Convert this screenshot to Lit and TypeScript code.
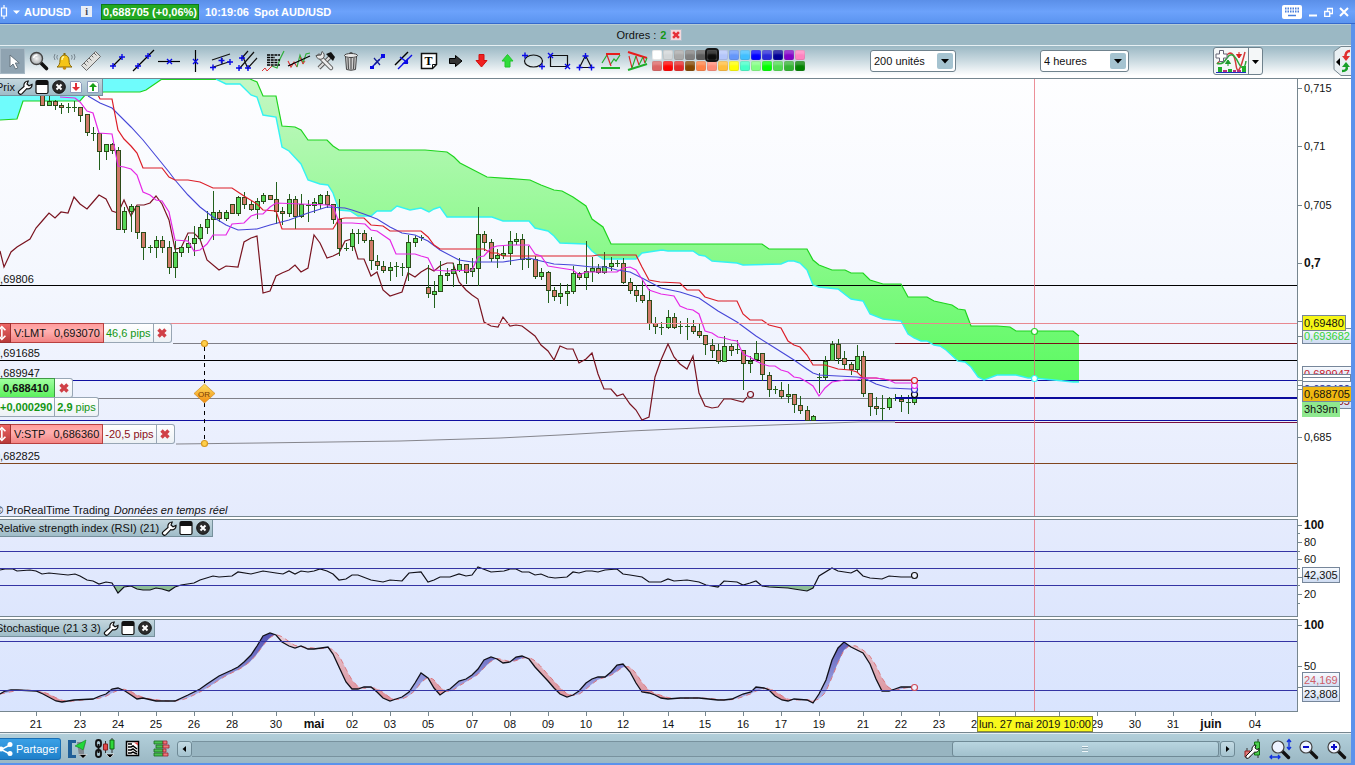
import { LitElement, html, svg, css } from "lit";
import { customElement } from "lit/decorators.js";
import { classMap } from "lit/directives/class-map.js";

type Pt = [number, number];
/* x, body top, body bottom, high, low, direction (1 up, 0 down) */
type Candle = [number, number, number, number, number, number];

const CANDLES: Candle[] = [
  [42, 93, 105, 92, 105, 0], [49, 101, 105, 96, 105, 1], [55, 101, 105, 100, 109, 0], [61, 105, 107, 103, 113, 0],
  [68, 107, 107, 103, 112, 1], [74, 107, 107, 101, 111, 1], [80, 107, 115, 107, 121, 0], [87, 114, 132, 114, 135, 0],
  [93, 133, 133, 127, 140, 1], [99, 133, 151, 133, 169, 0], [106, 144, 151, 144, 159, 1], [112, 144, 150, 143, 153, 0],
  [118, 150, 229, 147, 229, 0], [124, 211, 229, 207, 232, 1], [131, 206, 211, 204, 231, 1], [137, 206, 232, 206, 238, 0],
  [143, 232, 247, 232, 259, 0], [150, 247, 247, 245, 252, 1], [156, 240, 247, 236, 257, 1], [162, 240, 247, 236, 252, 0],
  [169, 247, 267, 241, 273, 0], [175, 252, 267, 241, 277, 1], [181, 247, 252, 246, 256, 1], [188, 243, 247, 236, 252, 1],
  [194, 238, 243, 226, 255, 1], [200, 227, 238, 224, 240, 1], [207, 219, 227, 211, 233, 1], [213, 212, 219, 191, 239, 1],
  [219, 212, 218, 210, 221, 0], [226, 212, 218, 210, 220, 1], [232, 204, 213, 204, 213, 0], [238, 197, 213, 196, 215, 1],
  [244, 197, 204, 192, 208, 0], [251, 204, 209, 201, 210, 0], [257, 201, 209, 198, 218, 1], [263, 195, 201, 193, 203, 1],
  [270, 195, 199, 195, 199, 0], [276, 199, 211, 182, 223, 0], [282, 211, 213, 207, 224, 0], [289, 199, 213, 194, 216, 1],
  [295, 199, 216, 196, 228, 0], [301, 204, 216, 194, 217, 1], [308, 205, 205, 200, 221, 1], [314, 202, 205, 198, 212, 1],
  [320, 195, 203, 194, 208, 1], [327, 195, 204, 191, 207, 0], [333, 204, 219, 204, 223, 0], [339, 219, 248, 199, 255, 0],
  [346, 248, 248, 243, 250, 1], [352, 233, 246, 229, 250, 1], [358, 233, 233, 229, 243, 1], [364, 233, 240, 230, 242, 0],
  [371, 240, 260, 237, 269, 0], [377, 261, 265, 255, 269, 0], [383, 266, 270, 261, 272, 0], [390, 267, 270, 262, 280, 1],
  [396, 266, 266, 262, 276, 1], [402, 267, 267, 263, 275, 1], [408, 242, 267, 235, 280, 1], [415, 238, 242, 236, 246, 1],
  [421, 237, 237, 235, 240, 1], [428, 287, 293, 265, 297, 0], [434, 291, 294, 281, 307, 1], [440, 275, 291, 261, 291, 1],
  [447, 273, 275, 268, 280, 1], [453, 269, 273, 263, 286, 1], [459, 264, 270, 258, 271, 1], [466, 264, 272, 264, 283, 0],
  [472, 268, 271, 258, 276, 1], [478, 234, 268, 207, 285, 1], [484, 234, 242, 231, 250, 0], [491, 242, 258, 239, 261, 0],
  [497, 255, 258, 249, 267, 1], [503, 253, 255, 246, 258, 1], [510, 241, 253, 231, 264, 1], [516, 239, 241, 233, 244, 1],
  [522, 239, 259, 234, 269, 0], [528, 259, 259, 246, 267, 1], [535, 259, 276, 256, 278, 0], [541, 272, 276, 268, 279, 1],
  [548, 272, 290, 271, 302, 0], [554, 290, 296, 287, 300, 0], [560, 293, 296, 283, 303, 1], [567, 291, 293, 284, 305, 1],
  [573, 273, 291, 266, 293, 1], [579, 273, 277, 272, 279, 0], [586, 271, 277, 241, 289, 1], [592, 268, 271, 257, 281, 1],
  [598, 268, 272, 264, 273, 0], [604, 266, 272, 252, 273, 1], [611, 263, 266, 257, 270, 1], [617, 263, 263, 260, 266, 1],
  [623, 263, 282, 258, 283, 0], [630, 282, 290, 278, 293, 0], [636, 290, 295, 285, 301, 0], [642, 295, 300, 280, 302, 0],
  [649, 300, 323, 289, 329, 0], [655, 323, 326, 317, 333, 0], [661, 327, 327, 322, 334, 1], [668, 317, 327, 310, 328, 1],
  [674, 317, 327, 313, 328, 0], [680, 326, 326, 321, 333, 1], [687, 326, 326, 318, 339, 1], [693, 326, 331, 320, 333, 0],
  [699, 331, 335, 323, 337, 0], [705, 335, 344, 335, 354, 0], [712, 345, 350, 339, 357, 0], [718, 350, 361, 344, 363, 0],
  [724, 346, 361, 336, 361, 1], [731, 346, 350, 344, 355, 0], [737, 349, 349, 340, 353, 1], [743, 350, 363, 350, 389, 0],
  [750, 361, 363, 356, 372, 1], [756, 353, 359, 341, 361, 1], [762, 353, 374, 353, 380, 0], [769, 375, 389, 372, 396, 0],
  [775, 389, 389, 386, 393, 1], [781, 390, 396, 382, 398, 0], [788, 394, 396, 384, 402, 1], [794, 394, 404, 394, 412, 0],
  [800, 405, 410, 396, 413, 0], [807, 410, 420, 406, 420, 0], [813, 416, 420, 415, 420, 1], [819, 377, 377, 373, 392, 1],
  [825, 361, 377, 356, 380, 1], [832, 344, 360, 341, 360, 1], [838, 344, 358, 339, 363, 0], [844, 358, 364, 351, 369, 0],
  [851, 364, 369, 362, 374, 0], [857, 356, 369, 345, 372, 1], [863, 356, 393, 351, 396, 0], [870, 393, 406, 393, 415, 0],
  [876, 406, 408, 397, 414, 0], [882, 408, 408, 395, 419, 1], [889, 398, 407, 397, 409, 1], [895, 398, 398, 394, 400, 1],
  [901, 399, 401, 395, 411, 0], [908, 402, 402, 395, 413, 1], [914, 398, 402, 396, 404, 1],
];

const CHIKOU = "0,251 4,267 11,252 17,247 30,239 36,228 43,220 49,213 55,218 61,212 68,213 74,197 80,204 87,209 93,202 99,195 106,199 112,211 118,213 124,200 131,216 137,205 144,205 150,203 156,196 162,204 169,220 175,249 181,248 188,233 194,233 200,239 207,260 219,270 226,266 238,267 244,242 251,238 257,236 263,293 270,291 276,276 282,273 289,270 295,265 301,272 308,268 314,235 320,243 327,258 333,256 339,253 345,241 352,239 358,259 364,259 371,276 377,272 383,290 390,296 402,292 408,273 415,277 421,272 428,268 434,271 440,266 447,263 453,263 459,282 466,290 472,295 478,299 484,322 491,326 498,327 503,317 510,326 516,325 522,326 535,336 541,345 548,351 554,360 560,346 567,349 573,349 579,363 586,359 592,353 598,374 604,389 611,389 617,396 623,394 630,404 636,410 642,420 649,417 655,377 661,360 668,344 674,357 680,364 687,369 693,356 699,393 705,406 712,408 718,407 724,399 731,399 743,402 747,397";
const TENKAN = "60,97 75,98 80,102 87,111 93,113 99,133 112,134 118,166 124,167 131,169 137,175 143,192 150,195 156,200 162,201 169,212 175,240 188,241 194,251 200,250 207,244 213,235 226,235 232,224 244,223 251,216 257,214 263,214 270,207 276,203 301,204 327,205 333,206 339,223 352,223 365,224 371,230 377,231 390,240 396,254 415,254 421,256 428,258 434,270 447,271 472,270 478,257 484,256 491,248 497,246 510,245 529,245 535,254 541,256 548,266 560,268 573,270 579,275 586,272 617,272 623,268 630,267 636,270 642,279 649,290 661,294 674,296 680,306 687,309 693,310 699,314 705,331 712,333 718,337 724,338 731,340 737,341 743,354 750,357 756,361 762,364 769,366 775,366 781,370 788,372 794,377 800,378 807,382 813,386 819,396 825,388 832,382 845,380 857,380 863,378 876,378 889,380 895,383 911,383";
const KIJUN = "98,95 100,99 112,99 118,130 124,139 131,146 137,153 143,168 162,168 169,177 175,180 188,180 200,182 213,188 232,188 244,196 257,204 263,210 276,211 282,229 333,229 339,219 345,218 364,218 371,225 383,226 390,231 421,231 428,237 434,245 440,249 484,249 491,253 497,253 503,256 592,256 598,255 636,255 642,267 649,280 660,282 680,283 687,290 699,290 705,297 718,301 737,301 743,314 750,320 762,320 769,325 781,328 788,341 794,345 800,347 807,355 813,365 825,365 838,369 850,370 857,372 863,378 876,378 889,380 911,380";
const AVERAGE = "88,96 100,103 112,108 131,127 143,140 156,156 169,172 175,180 188,195 200,207 213,217 226,225 238,230 257,229 270,225 289,220 308,213 327,207 345,208 352,210 364,214 377,219 390,227 402,233 415,235 428,241 440,250 459,260 472,262 503,262 529,258 541,261 554,264 573,265 592,267 605,267 617,270 630,272 642,278 661,288 680,292 699,298 718,311 737,322 756,336 775,348 794,360 807,369 813,373 819,375 838,376 857,377 864,378 876,384 889,388 911,389";
const LONG_AVERAGE = "176,444 260,443 330,442 400,441 500,438 560,435 630,431 720,427 800,424 860,422 895,422";
const SPAN_A = "216,79 250,79 257,82 263,96 276,96 282,126 295,127 301,130 308,140 327,140 333,146 339,150 425,150 447,152 454,157 460,163 487,177 530,180 541,185 554,190 562,191 573,197 586,206 592,219 603,227 611,244 762,244 769,249 807,249 813,260 819,265 832,270 845,270 851,273 863,273 870,280 883,284 901,284 908,297 927,297 934,301 952,305 958,309 965,310 971,326 997,326 1010,327 1016,331 1073,331 1079,336";
const SPAN_B = "216,79 226,84 240,84 251,95 257,97 263,115 276,117 282,147 289,151 301,164 308,180 320,184 328,185 333,193 339,210 350,211 358,216 371,216 377,211 391,211 397,206 410,210 421,208 429,212 434,209 440,207 447,217 492,217 503,221 529,221 535,228 548,231 554,236 560,243 586,244 592,251 597,255 603,259 636,259 642,253 662,250 668,251 693,251 699,255 705,256 712,261 737,263 743,265 781,264 788,261 794,261 800,263 807,270 813,285 819,287 838,289 851,299 863,301 870,314 883,319 901,321 908,334 914,338 921,341 927,341 934,345 940,346 946,350 958,361 965,362 971,367 978,377 984,380 997,375 1016,375 1028,378 1034,378 1054,380 1073,382 1079,382";
const EARLY_SPAN = "0,120 17,119 23,101 80,101 86,94 104,92 140,92 146,90 162,79";
const RSI = "0,570 5,569 13,569 17,571 30,570 36,571 42,574 49,573 68,575 75,574 80,576 87,580 93,581 99,584 106,582 112,583 118,593 124,587 131,586 137,589 143,590 150,590 156,588 162,589 169,591 175,587 181,585 194,583 200,580 213,576 219,577 232,576 238,572 251,574 263,571 276,573 283,574 289,571 295,574 301,571 308,572 314,571 320,569 327,571 333,574 339,580 346,579 352,575 358,575 371,580 383,582 390,580 402,581 409,573 421,572 428,582 434,580 440,577 450,577 459,574 466,576 472,575 478,567 491,572 504,571 510,569 516,569 522,572 529,572 535,575 541,574 548,577 555,578 567,577 573,572 579,573 586,571 592,571 598,572 605,570 617,569 623,574 630,575 642,577 649,582 661,582 668,579 674,581 687,580 699,582 706,585 718,587 724,581 737,582 743,585 750,583 756,581 762,586 769,587 788,588 794,589 807,591 813,588 819,576 832,568 838,571 851,573 857,570 863,576 870,578 882,579 889,576 901,577 911,577";
const STOCHASTIC = "0,694 5,691 11,690 17,690 36,691 43,694 56,701 62,702 74,700 93,699 100,696 106,694 112,689 118,688 125,691 131,695 137,699 143,698 156,701 168,701 175,701 188,695 200,689 207,684 213,680 219,676 232,670 238,667 244,662 251,655 257,646 263,636 270,633 276,635 282,642 289,646 295,648 301,646 308,649 314,649 328,647 333,654 339,667 346,682 352,689 358,689 364,687 371,687 377,692 383,698 390,701 396,699 402,697 409,692 415,683 421,673 428,678 434,688 440,695 447,690 450,689 459,681 466,679 472,675 478,669 484,660 491,657 497,659 503,663 510,662 516,657 522,656 529,659 535,667 548,681 554,688 560,694 567,697 573,695 579,691 586,683 592,679 598,677 605,677 611,672 617,665 623,664 630,672 636,683 642,692 649,693 655,695 661,698 668,699 680,698 699,698 718,700 724,700 732,699 743,694 751,692 756,687 764,688 769,690 775,696 782,700 788,701 794,699 807,700 813,703 819,694 826,680 832,660 838,648 844,642 851,647 857,650 863,653 870,664 876,679 882,691 889,691 895,689 901,687 911,687";

const parse = (s: string): Pt[] => s.split(" ").map((p) => p.split(",").map(Number) as Pt);
const join = (pts: Pt[]): string => pts.map((p) => p.join(",")).join(" ");
const reverse = (s: string): string => s.split(" ").reverse().join(" ");

/* Linear interpolation of a polyline at x */
function valueAt(pts: Pt[], x: number): number {
  if (x <= pts[0][0]) return pts[0][1];
  for (let i = 1; i < pts.length; i++) {
    const [x1, y1] = pts[i];
    if (x <= x1) {
      const [x0, y0] = pts[i - 1];
      return y0 + ((y1 - y0) * (x - x0)) / (x1 - x0);
    }
  }
  return pts[pts.length - 1][1];
}

/* %D is the three-period mean of %K */
const K_LINE = parse(STOCHASTIC);
const PERIOD = 6;
const SAMPLES = Array.from({ length: 457 }, (_, i) => i * 2);
const fastLine: Pt[] = SAMPLES.map((x) => [x, valueAt(K_LINE, x)]);
const slowLine: Pt[] = SAMPLES.map((x) => [
  x,
  (valueAt(K_LINE, x) + valueAt(K_LINE, x - PERIOD) + valueAt(K_LINE, x - 2 * PERIOD)) / 3,
]);
const bullArea = join([...fastLine.map(([x, y], i): Pt => [x, Math.min(y, slowLine[i][1])]), ...[...slowLine].reverse()]);
const bearArea = join([...fastLine.map(([x, y], i): Pt => [x, Math.max(y, slowLine[i][1])]), ...[...slowLine].reverse()]);

const PRICE = { top: 79, height: 438 };
const OSC1 = { top: 519, height: 98 };
const OSC2 = { top: 619, height: 93 };
type Panel = typeof PRICE;
const pct = (y: number, p: Panel): string => `top:${(((y - p.top) / p.height) * 100).toFixed(3)}%`;
const left = (x: number): string => `left:${((x / 1298) * 100).toFixed(3)}%`;

const DATES: [number, string, boolean?][] = [
  [36, "21"], [80, "23"], [118, "24"], [156, "25"], [194, "26"], [232, "28"], [276, "30"], [314, "mai", true],
  [352, "02"], [390, "03"], [428, "05"], [472, "07"], [510, "08"], [548, "09"], [586, "10"], [623, "12"],
  [668, "14"], [705, "15"], [743, "16"], [781, "17"], [819, "19"], [863, "21"], [901, "22"], [939, "23"],
  [977, "24"], [1015, ""], [1059, ""], [1097, "29"], [1135, "30"], [1173, "31"], [1211, "juin", true], [1255, "04"],
];

const plus = (x: number, y: number) => svg`<path d="M${x - 3} ${y}h6M${x} ${y - 3}v6" stroke="#0a0ae6" stroke-width="1.4" fill="none"/>`;
const cross = (x: number, y: number) => svg`<path d="M${x - 2.5} ${y - 2.5}l5 5M${x + 2.5} ${y - 2.5}l-5 5" stroke="#0a0ae6" stroke-width="1.4" fill="none"/>`;

const TOOLS: [string, unknown][] = [
  ["Sélection", svg`<path d="M10 7v12l3-3 2.500 5 2.300-1.200-2.500-4.800h4z" fill="#fff" stroke="#66757f" stroke-width="1"/>`],
  ["Loupe", svg`<path d="M15.500 15.500l5 5" stroke="#111" stroke-width="3.600" stroke-linecap="round"/><circle cx="10.500" cy="10.500" r="6" fill="url(#lens)" stroke="#444" stroke-width="1.400"/><path d="M7.500 10a4 4 0 0 1 4-3" stroke="#fff" stroke-width="1.500" fill="none"/>`],
  ["Alertes", svg`<path d="M5 19c2-1.500 3-3 3-7a4.500 5 0 0 1 9 0c0 4 1 5.500 3 7z" fill="#f5c518" stroke="#8a6a08"/><path d="M10 12c0-2 .8-3 2-3.300" stroke="#fff3a0" stroke-width="1.500" fill="none"/><circle cx="12.500" cy="20" r="1.800" fill="#c78a0c"/><path d="M12.500 5v2" stroke="#8a6a08" stroke-width="2"/><path d="M5.500 7q-1.500 2 0 4.500M3 6q-2 3 0 6M19.500 7q1.500 2 0 4.500M22 6q2 3 0 6" stroke="#6f7d86" stroke-width=".9" fill="none"/>`],
  ["Règle", svg`<path d="M3.500 17.500L17.500 3.500l5 5-14 14z" fill="#e0e0dd" stroke="#6a6a6a"/><path d="M6 15l2.500 2.500M8.500 12.500l1.800 1.800M11 10l2.500 2.500M13.500 7.500l1.800 1.800M16 5l2.500 2.500" stroke="#555" stroke-width=".9"/>`],
  ["Segment", svg`<path d="M9 18l9-9" stroke="#000" stroke-width="1.200"/>${plus(9, 18)}${plus(18, 9)}`],
  ["Droite", svg`<path d="M3 23L24 2" stroke="#000" stroke-width="1.200"/>${plus(8, 18)}${plus(18, 8)}`],
  ["Ligne horizontale", svg`<path d="M2 13.500h22" stroke="#000" stroke-width="1.200"/>${cross(13.5, 13.5)}`],
  ["Ligne verticale", svg`<path d="M13.500 2v22" stroke="#000" stroke-width="1.200"/>${cross(13.5, 13.5)}`],
  ["Canal", svg`<path d="M4 12l18-6M4 19.500l18-6M14 10v6" stroke="#111" stroke-width="1.200"/>${plus(5, 19.5)}${plus(13.5, 12.5)}${plus(22, 14)}`],
  ["Fourchette", svg`<path d="M7 11l7-8M5 21L20 4M13 21l10-11M9 9l5 12" stroke="#111" stroke-width="1.200"/>${plus(8, 10)}${plus(5, 20)}${plus(14, 20)}`],
  ["Texte sur courbe", svg`<path d="M2 23l3-3 2 3 5-5" stroke="#d33" fill="none"/><path d="M12 18l5 2 3-9 4-8" stroke="#2fae3a" stroke-width="1.200" fill="none"/><path d="M7 7h13M7 9.500h8M7 12h13M7 14.500h11M7 17h13" stroke="#000" stroke-width="1.300" stroke-dasharray="3 .7"/>`],
  ["Régression", svg`<path d="M2 13l3 6 3-5 3 5" stroke="#d33" stroke-width="1.100" fill="none"/><path d="M11 19l3-12 3 8 3-9 4-1" stroke="#2fae3a" stroke-width="1.100" fill="none"/><path d="M14 9l3 7 2-3" stroke="#d33" fill="none"/><path d="M2 18L24 8" stroke="#000" stroke-width="1.200"/>`],
  ["Outils", svg`<path d="M7 20L19 8" stroke="#555" stroke-width="4"/><path d="M7 20L19 8" stroke="#ddd" stroke-width="2.200"/><path d="M14 6l5-2 4 5-2 4-3-3z" fill="#111"/><path d="M7 8l12 12" stroke="#555" stroke-width="4.500" stroke-linecap="round"/><path d="M7 8l12 12" stroke="#ececec" stroke-width="2.700" stroke-linecap="round"/><path d="M4 7.500a4.500 4.500 0 0 0 7 3 4.500 4.500 0 0 0-1-7l-1 3.500z" fill="#e8e8e8" stroke="#555"/>`],
  ["Supprimer", svg`<path d="M7.500 8.500h11l-1 13q-4.500 1.500-9 0z" fill="#cfcfcf" stroke="#444"/><path d="M10 10l.5 11M13 10v11.500M16 10l-.5 11" stroke="#555" stroke-width="1.200"/><ellipse cx="13" cy="7.500" rx="6.500" ry="2" fill="#e9e9e9" stroke="#444"/><path d="M11 5.500q2-2 4 0" stroke="#444" fill="none"/>`],
  ["Prolonger", svg`<path d="M8 19L19 8" stroke="#0a0ae6" stroke-width="1.400" stroke-dasharray="3 1"/><path d="M6 18h4v3H6zM17 6h4v4h-4z" fill="#0a0ae6"/><path d="M10 10l6 7M16 11l-6 6" stroke="#111a90" stroke-width="1.200"/>`],
  ["Parallèle", svg`<path d="M5 17L18 4" stroke="#000" stroke-width="1.400"/><path d="M8 21L22 7M10 9l8 6" stroke="#0a0ae6" stroke-width="1.400"/><path d="M18 10v6h-6z" fill="#0a0ae6"/>`],
  ["Texte", svg`<path d="M5.500 5.500h15v11l-4 4h-11z" fill="#fff" stroke="#111" stroke-width="1.500"/><path d="M20.500 16.500h-4v4" fill="none" stroke="#111"/><text x="12.500" y="17" text-anchor="middle" font-family="Liberation Serif, serif" font-weight="bold" font-size="12" fill="#000">T</text>`],
  ["Flèche droite", svg`<path d="M7.500 10.500h6v-3l6.500 5.500-6.500 5.500v-3h-6z" fill="#333" stroke="#000"/>`],
  ["Flèche bas", svg`<path d="M11 6.500h5v6h3l-5.500 6.500-5.500-6.500h3z" fill="#f02020" stroke="#d01010"/>`],
  ["Flèche haut", svg`<path d="M11 19v-6h-3l5.500-6.500 5.500 6.500h-3v6z" fill="#2fdc3a" stroke="#22c42c"/>`],
  ["Ellipse", svg`<ellipse cx="13.500" cy="13" rx="9" ry="6" fill="none" stroke="#111" stroke-width="1.200"/>${plus(5, 7.5)}${plus(22, 18.5)}`],
  ["Rectangle", svg`<path d="M4.500 7.500h17v11h-17z" fill="none" stroke="#111" stroke-width="1.200"/>${cross(4.5, 7.5)}${cross(21.5, 18.5)}`],
  ["Triangle", svg`<path d="M13.500 7.500l6 12h-12z" fill="none" stroke="#111" stroke-width="1.200"/>${plus(13.5, 8)}${plus(7.5, 19.5)}${plus(19.5, 19.5)}`],
  ["Range", svg`<path d="M8 6h14" stroke="#e81c1c" stroke-width="2"/><path d="M3 20h19" stroke="#1fae2a" stroke-width="2"/><path d="M4 15l5-8M12 17l4-6 2 2 4-6" stroke="#1fae2a" fill="none" stroke-width="1.200"/><path d="M9 7l4 11" stroke="#d22" stroke-width="1.200"/>`],
  ["Triangle de range", svg`<path d="M4 4l19 6" stroke="#e81c1c" stroke-width="2"/><path d="M4 22l19-6" stroke="#1fae2a" stroke-width="2"/><path d="M5 8l3 12M12 8l3 9M19 9l2 6" stroke="#d22" stroke-width="1.100"/><path d="M8 20l4-12M15 17l4-8M21 15l2-5" stroke="#1fae2a" stroke-width="1.100"/>`],
];

const COLORS = [
  "#ffffff", "#d2d6d8", "#a9a9a9", "#808080", "#5c5c5c", "#0c0c0c", "#b4c6fa", "#6496fa", "#40bfff", "#0000ff", "#2828d8", "#000096", "#8200c8", "#ff82c0",
  "#dc6464", "#ff0000", "#e62828", "#824600", "#ff8246", "#ff8c78", "#ffbe3c", "#ffff00", "#46ffc8", "#82ff82", "#00ff00", "#50dc50", "#32b432", "#008200",
];

const wrench = html`<svg class="glyph" viewBox="0 0 16 16"><path d="M2 14.500c-1-1-.8-1.800 0-2.600l5-4.400c-.6-3 1.300-5.500 4.200-5.500l-1.200 3 2 1.800 3-1.300c.2 3-2.300 5-5.200 4.200l-4.700 5c-1 1-2 .9-3.100-.2z" fill="#fff" stroke="#111" stroke-width="1.200"/></svg>`;
const windowGlyph = html`<svg class="glyph" viewBox="0 0 16 16"><rect x="2" y="1.500" width="12" height="13" rx="1.500" fill="#fff" stroke="#111" stroke-width="1.200"/><path d="M2 2h12v4H2z" fill="#111"/></svg>`;
const closeGlyph = html`<svg class="glyph" viewBox="0 0 16 16"><circle cx="8" cy="8" r="6.300" fill="#2c2c2c" stroke="#111"/><path d="M5.500 5.500l5 5M10.500 5.500l-5 5" stroke="#fff" stroke-width="2"/></svg>`;
const downPage = html`<svg class="glyph" viewBox="0 0 16 16"><path d="M2.500 2.500h9l2 2v9h-11z" fill="#fff" stroke="#8b9aba"/><path d="M7 4h2v4h3l-4 4-4-4h3z" fill="#e0303a"/></svg>`;
const upPage = html`<svg class="glyph" viewBox="0 0 16 16"><path d="M2.500 2.500h9l2 2v9h-11z" fill="#fff" stroke="#8b9aba"/><path d="M7 12h2v-4h3l-4-4-4 4h3z" fill="#16a016"/></svg>`;
const redCross = html`<svg class="cross" viewBox="0 0 12 12"><path d="M2.500 2.500l7 7M9.500 2.500l-7 7" stroke="#d04046" stroke-width="3.400"/></svg>`;
const handle = html`<svg class="handle" viewBox="0 0 11 20"><path d="M2 5v10M-2 7l4-4 4 4M-2 13l4 4 4-4" stroke="#fff" stroke-width="1.800" fill="none"/></svg>`;

@customElement("app-root")
export class AppRoot extends LitElement {
  static styles = css`
    :host { display: flex; flex-direction: column; height: 100vh; min-height: 480px; box-sizing: border-box; overflow: hidden;
      font: 11px/14px "Liberation Sans", Arial, sans-serif; color: #111; background: #5b92ec; border-bottom: 2px solid #5b92ec; }
    * { box-sizing: border-box; }
    button { font: inherit; color: inherit; padding: 0; border: 0; background: none; display: block; }
    svg { display: block; }
    .title { flex: none; height: 24px; display: flex; align-items: center; color: #fff; font-weight: bold; white-space: nowrap;
      background: linear-gradient(#5b8fe8, #6ca2fb 50%, #5b94f0); border-bottom: 1px solid #3569cc; }
    .symbol { display: flex; align-items: center; gap: 3px; font-weight: bold; }
    .info { width: 11px; height: 11px; margin-left: 10px; background: #e8eef8; color: #445; font: bold 10px/11px "Liberation Serif", serif; }
    .quote { margin: 0 6px 0 9px; padding: 0 1px; background: #22a822; border: 1px solid #0c7a1c; line-height: 14px; }
    .clock { margin-right: 5px; }
    .controls { margin-left: auto; display: flex; align-items: center; gap: 6px; padding-right: 6px; }
    .frame { flex: 1; min-height: 0; display: flex; flex-direction: column; margin-right: 1px; border-right: 3px solid #5b92ec; background: #fff; }
    .orders { flex: none; height: 21px; display: flex; align-items: center; justify-content: center; gap: 4px; padding-right: 52px;
      background: #9bb8c4; border-top: 1px solid #b6ccd5; }
    .orders b { color: #139613; }
    .cancel { width: 12px; height: 12px; background: #f4d8dc; border: 1px solid #aebfcc; }
    .tools { flex: none; height: 34px; display: flex; align-items: center; padding-bottom: 2px; border-top: 1px solid #e6eff3; border-bottom: 1px solid #76868f;
      background: linear-gradient(#9bb8c4, #c9d9e0 45%, #ffffff 92%); }
    .tool { width: 26px; height: 26px; flex: none; }
    .tool.on { background: #8fa3b1; border: 1px solid #a6b8c4; width: 25px; margin-right: 1px; }
    .tool svg { width: 26px; height: 26px; }
    .tool.on svg { margin: -1px; }
    .palette { display: grid; grid-template-columns: repeat(14, 11px); grid-auto-rows: 11px; margin-left: 2px; }
    .swatch { width: 10px; height: 10px; border-radius: 2px; box-shadow: inset 0 4px 2px rgba(255, 255, 255, .22), inset 0 0 0 1px rgba(90, 90, 90, .15); }
    .swatch.on { outline: 2px solid #151515; position: relative; }
    .pick { position: relative; margin-left: 64px; height: 22px; display: block; }
    .pick.frameSize { margin-left: 84px; }
    .pick select { appearance: none; width: 86px; height: 22px; padding: 0 22px 0 3px; font: 11px "Liberation Sans", Arial, sans-serif; color: #111;
      background: #fff; border: 1px solid #6f828d; border-radius: 3px; }
    .pick.frameSize select { width: 89px; }
    .pick svg { position: absolute; right: 3px; top: 3px; width: 16px; height: 16px; pointer-events: none; }
    .right { margin-left: auto; display: flex; align-items: center; }
    .indicator { display: flex; height: 28px; border: 1px solid #6f828d; border-radius: 3px; background: #f4f7f8; overflow: hidden; }
    .indicator svg { width: 34px; height: 26px; }
    .indicator .drop { width: 14px; border-left: 1px solid #6f828d; }
    .indicator .drop svg { width: 13px; }
    .sync { margin-left: 70px; }
    .panels { flex: 1; min-height: 0; display: flex; flex-direction: column; gap: 2px; }
    .panel { min-height: 0; display: flex; }
    .panel.price { flex: 438 1 0; }
    .panel.rsi { flex: 98 1 0; }
    .panel.stoch { flex: 93 1 0; }
    .plot { position: relative; flex: 1; min-width: 0; overflow: hidden; border-right: 1px solid #76868f; border-bottom: 1px solid #76868f; }
    .price .plot { background: linear-gradient(#fefeff, #f4f7fe 45%, #e5ebfd); }
    .rsi .plot { border-top: 1px solid #76868f; background: linear-gradient(#e5ebfd, #dde6fd); }
    .stoch .plot { border-top: 1px solid #76868f; background: linear-gradient(#e0e8fd, #d9e4fe); }
    .canvas { position: absolute; inset: 0; width: 100%; height: 100%; }
    .head { position: absolute; left: 0; top: 0; height: 17px; display: flex; align-items: center; gap: 1px; padding-right: 1px; white-space: nowrap;
      background: linear-gradient(#c3d6de, #9fbcc8); border-right: 1px solid #76909c; border-bottom: 1px solid #76909c; }
    .head span { margin-left: -4px; margin-right: 1px; }
    .glyph { width: 16px; height: 16px; }
    .level { position: absolute; left: -6px; line-height: 12px; margin-top: -12px; white-space: nowrap; }
    .credit { position: absolute; left: -5px; bottom: -1px; white-space: nowrap; }
    .credit i { margin-left: 1px; }
    .order { position: absolute; left: 0; display: flex; height: 20px; white-space: nowrap; }
    .cell { display: flex; align-items: center; justify-content: center; border: 1px solid #98a6b4; border-left: 0; background: linear-gradient(#ffffff, #ecf1f5); padding: 0 2px; }
    .order .cell:last-child { border-radius: 0 3px 3px 0; }
    .cell.sell { background: linear-gradient(#ff9c9c, #ffb0b0 40%, #f28484); border-color: #b84040; padding: 0 3px; gap: 8px; }
    .cell.grip { background: linear-gradient(#e66, #b83a3a); border-color: #a03030; width: 11px; padding: 0; }
    .cell.gain { color: #139613; }
    .cell.loss { color: #8b1020; }
    .cell.hold { background: linear-gradient(#a0ffa0, #5cf05c); border-color: #3f9a45; font-weight: bold; width: 55px; justify-content: flex-end; padding: 0 5px 0 0; }
    .cell.strong { font-weight: bold; width: 55px; justify-content: flex-start; padding: 0; }
    .cell.wide { width: 44px; }
    .cell.strong + .cell b { margin-right: 3px; }
    .cell.x { width: 18px; padding: 0; }
    .cross { width: 12px; height: 12px; }
    .handle { width: 11px; height: 18px; }
    .axis { position: relative; flex: none; width: 53px; overflow: hidden; background: #fff; }
    .mark { position: absolute; left: 0; height: 15px; margin-top: -7px; display: flex; align-items: center; gap: 2px; line-height: 15px; white-space: nowrap; }
    .mark::before { content: ""; width: 4px; height: 1px; background: #76868f; }
    .mark.minor::before { width: 2px; }
    .mark.big { font-weight: bold; font-size: 12px; }
    .tag { position: absolute; left: 4px; height: 16px; margin-top: -8px; padding: 0 1px; line-height: 14px; border: 1px solid #76869a;
      background: linear-gradient(#f7fafe, #cfdcf2); white-space: nowrap; }
    .tag.cursor { background: #f6f616; }
    .tag.last { background: #f0b810; }
    .tag.timer { background: #8fe88f; border-color: #8fe88f; }
    .tag.green { color: #35d435; }
    .tag.red { color: #c8202c; }
    .tag.navy { color: #1c1c90; }
    .tag.maroon { color: #8b1020; }
    .tag.rose { color: #cf5c66; }
    .tag.blank { width: 49px; height: 5px; background: #fff; margin-top: 0; }
    .dates { position: relative; flex: none; height: 21px; border-bottom: 1px solid #76868f; overflow: hidden; }
    .scale { position: absolute; left: 0; right: 53px; top: 0; bottom: 0; }
    .date { position: absolute; top: 0; width: 40px; margin-left: -20px; display: flex; flex-direction: column; align-items: center; line-height: 16px; }
    .date::before { content: ""; width: 1px; height: 4px; background: #76868f; margin-left: 1px; }
    .date.big { font-weight: bold; font-size: 12px; }
    .when { position: absolute; top: 4px; width: 116px; margin-left: -58px; text-align: center; line-height: 14px; background: #f8f81c; border: 1px solid #8a8a30; white-space: nowrap; }
    .bottom { flex: none; height: 30px; display: flex; align-items: center; gap: 4px; padding-right: 3px; border-top: 1px solid #e6eff3; background: linear-gradient(#b2cfda, #9bb8c4); }
    .share { display: flex; align-items: center; gap: 3px; width: 61px; height: 22px; color: #fff; border: 1px solid #1a6fb4; border-left: 0; border-radius: 0 3px 3px 0; background: linear-gradient(#3aa0e6, #1f80ca); }
    .share svg { width: 13px; height: 16px; }
    .left { display: flex; align-items: center; gap: 4px; }
    .left button svg { width: 24px; height: 22px; }
    .scroll { flex: 1; display: flex; height: 16px; margin-right: 1px; }
    .track { flex: 1; display: flex; justify-content: flex-end; border: 1px solid #78929e; border-width: 1px 0; background: #98b5c1; }
    .thumb { width: 26%; margin: -1px 1px -1px 0; border: 1px solid #6f8a96; border-radius: 3px; background: linear-gradient(#b9d5e0, #a2c1cd); display: flex; align-items: center; justify-content: center; }
    .step { width: 15px; height: 16px; border: 1px solid #6f8a96; border-radius: 3px; background: linear-gradient(#c4dbe4, #a5c3cf); }
    .step svg { width: 13px; height: 14px; }
    .zoom svg { width: 24px; height: 24px; }
  `;

  private get crosshair() {
    return svg`<path d="M1034.500 0v765" stroke="#e66a76" stroke-opacity=".75" fill="none"/>`;
  }

  private renderPrice() {
    const hline = (y: number, color: string, from = 0, to = 1297) =>
      svg`<path d="M${from} ${y + 0.5}H${to}" stroke=${color} fill="none"/>`;
    const ring = (x: number, y: number, color: string, fill = "#eef2ff") =>
      svg`<circle cx=${x + 0.5} cy=${y + 0.5} r="3" fill=${fill} stroke=${color} stroke-width="1.200"/>`;
    return html`<svg class="canvas" viewBox="0 79 1297 437" preserveAspectRatio="none" aria-label="Graphique AUD/USD">
      <defs>
        <linearGradient id="cloud" gradientUnits="userSpaceOnUse" x1="0" y1="79" x2="0" y2="385">
          <stop offset="0" stop-color="#c4f7c4"/><stop offset=".45" stop-color="#97f997"/><stop offset="1" stop-color="#5afa60"/>
        </linearGradient>
        <linearGradient id="or" x1="0" y1="0" x2="0" y2="1"><stop offset="0" stop-color="#ffe060"/><stop offset="1" stop-color="#f08c10"/></linearGradient>
      </defs>
      <polygon points=${`0,79 ${EARLY_SPAN}`} fill="#6ffcfc"/>
      <polyline points=${EARLY_SPAN} fill="none" stroke="#1ed41e" stroke-width="1.200"/>
      <path d="M162 79.500H252" stroke="#1ed41e"/>
      <polygon points=${`${SPAN_A} ${reverse(SPAN_B)}`} fill="url(#cloud)"/>
      ${hline(285, "#000")}${hline(343, "#808088", 173, 895)}${hline(343, "#7a1018", 895)}${hline(360, "#000")}
      ${hline(380, "#1010a0")}${hline(398, "#808088", 0, 895)}${hline(420, "#1010a0")}${hline(422, "#7a1040", 895)}${hline(463, "#80461e")}
      <polyline points=${SPAN_A} fill="none" stroke="#1ed41e" stroke-width="1.200"/>
      <polyline points=${SPAN_B} fill="none" stroke="#35f2f2" stroke-width="1.400"/>
      <polyline points=${LONG_AVERAGE} fill="none" stroke="#85858c"/>
      <polyline points=${CHIKOU} fill="none" stroke="#7a1420" stroke-width="1.200"/>
      ${CANDLES.map(([x, top, base, high, low, up]) => svg`<path d="M${x + 0.5} ${high}V${low + 1}" stroke="#22601c" fill="none"/>${
        base - top < 2
          ? svg`<path d="M${x - 2} ${top + 0.5}h5" stroke="#22601c"/>`
          : svg`<rect x=${x - 1.5} y=${top + 0.5} width="4" height=${base - top} fill=${up ? "#58d858" : "#d07a68"} stroke="#2c4a18"/>`
      }`)}
      <polyline points=${AVERAGE} fill="none" stroke="#4646d8" stroke-width="1.100"/>
      <polyline points=${KIJUN} fill="none" stroke="#dc1e28" stroke-width="1.200"/>
      <polyline points=${TENKAN} fill="none" stroke="#e628e6" stroke-width="1.200"/>
      <path d="M895 398H1297" stroke="#0a0a9c" stroke-width="2"/>
      ${hline(323, "#e88890")}
      ${this.crosshair}
      ${ring(914, 394, "#000")}${ring(914, 389, "#3232c8")}${ring(914, 385, "#e628e6")}${ring(914, 380, "#dc1e28")}
      ${ring(750, 394, "#7a1420")}${ring(1034, 331, "#2bd02b", "#fff")}${ring(1034, 378, "#35f2f2", "#fff")}
      <path d="M204.500 347V440" stroke="#000" stroke-dasharray="4 4" fill="none"/>
      ${ring(204, 343, "#d89a20", "#ffcf4a")}${ring(204, 443, "#d89a20", "#ffcf4a")}
      <path d="M204.500 384l10.500 9.500-10.500 9.500-10.500-9.500z" fill="url(#or)" stroke="#c88010" stroke-width=".6"/>
      <text x="204" y="397" text-anchor="middle" font-size="8" fill="#7a3c00">OR</text>
    </svg>`;
  }

  private renderRsi() {
    return html`<svg class="canvas" viewBox="0 520 1297 96" preserveAspectRatio="none" aria-label="RSI">
      <defs><clipPath id="low"><path d="M0 585.500H1297V616H0z"/></clipPath></defs>
      <polygon points=${`0,560 ${RSI} 911,560`} fill="#8cbd96" clip-path="url(#low)"/>
      <polyline points=${RSI} fill="none" stroke="#101018" stroke-width="1.200"/>
      <path d="M0 551.500H1297M0 568.500H1297M0 585.500H1297" stroke="#3434a4" fill="none"/>
      ${this.crosshair}
      <circle cx="914.500" cy="575.500" r="3" fill="#eef2ff" stroke="#111" stroke-width="1.200"/>
    </svg>`;
  }

  private renderStochastic() {
    return html`<svg class="canvas" viewBox="0 620 1297 91" preserveAspectRatio="none" aria-label="Stochastique">
      <defs>
        <linearGradient id="bull" gradientUnits="userSpaceOnUse" x1="0" y1="635" x2="0" y2="705"><stop offset="0" stop-color="#5252b4"/><stop offset="1" stop-color="#b4bcf0"/></linearGradient>
        <linearGradient id="bear" gradientUnits="userSpaceOnUse" x1="0" y1="635" x2="0" y2="705"><stop offset="0" stop-color="#e6cdd8"/><stop offset="1" stop-color="#dc8c96"/></linearGradient>
      </defs>
      <polygon points=${bullArea} fill="url(#bull)"/>
      <polygon points=${bearArea} fill="url(#bear)"/>
      <polyline points=${join(slowLine)} fill="none" stroke="#dc7880" stroke-dasharray="5 4"/>
      <polyline points=${STOCHASTIC} fill="none" stroke="#101018" stroke-width="1.300"/>
      <path d="M0 641.500H1297M0 690.500H1297" stroke="#3434a4" fill="none"/>
      ${this.crosshair}
      <circle cx="914.500" cy="687.500" r="3" fill="#eef2ff" stroke="#cf4c58" stroke-width="1.200"/>
    </svg>`;
  }

  private mark(p: Panel, y: number, label = "", kind = "") {
    return html`<div class="mark ${kind}" style=${pct(y, p)}>${label}</div>`;
  }

  private tag(p: Panel, y: number, label: string, kind = "") {
    return html`<div class="tag ${kind}" style=${pct(y, p)}>${label}</div>`;
  }

  private zoomButton(label: string, glyph: unknown) {
    return html`<button class="zoom" aria-label=${label}><svg viewBox="0 0 24 24">
      <path d="M14 14l6.500 6.500" stroke="#111" stroke-width="3.400" stroke-linecap="round"/>
      <circle cx="10" cy="10" r="6" fill="#eef3ff" stroke="#444" stroke-width="1.200"/>${glyph}</svg></button>`;
  }

  render() {
    return html`
      <header class="title">
        <button class="symbol">
          <svg width="21" height="16" viewBox="0 0 21 16"><path d="M4 1v3M4 12v3M1.500 4h5v8h-5z" fill="none" stroke="#fff" stroke-width="1.200"/><path d="M13 6.500h7l-3.500 3.500z" fill="#fff"/></svg>
          AUDUSD
        </button>
        <button class="info" aria-label="Informations">i</button>
        <span class="quote">0,688705 (+0,06%)</span>
        <span class="clock">10:19:06</span><span>Spot AUD/USD</span>
        <div class="controls">
          <button aria-label="Clavier"><svg width="20" height="14" viewBox="0 0 20 14"><rect width="20" height="14" rx="2" fill="#fff"/><path d="M3 3.500h14M3 6.500h14" stroke="#4a80de" stroke-width="2" stroke-dasharray="1.500 1"/><path d="M6 10.500h8" stroke="#4a80de" stroke-width="1.500"/></svg></button>
          <button aria-label="Réduire"><svg width="10" height="12" viewBox="0 0 10 12"><path d="M1 9.500h8" stroke="#fff" stroke-width="2"/></svg></button>
          <button aria-label="Restaurer"><svg width="9" height="12" viewBox="0 0 9 12"><path d="M3.500 5V2.500h5v5H6M.7 5.500h5v4.800h-5z" fill="none" stroke="#fff" stroke-width="1.300"/></svg></button>
          <button aria-label="Fermer"><svg width="10" height="12" viewBox="0 0 10 12"><path d="M1 2l8 8M9 2l-8 8" stroke="#fff" stroke-width="2"/></svg></button>
        </div>
      </header>
      <main class="frame">
        <div class="orders"><span>Ordres :</span> <b>2</b><button class="cancel" aria-label="Annuler les ordres"><svg width="10" height="10" viewBox="0 0 12 12"><path d="M2.500 2.500l7 7M9.500 2.500l-7 7" stroke="#e63038" stroke-width="3"/></svg></button></div>
        <div class="tools">
          ${TOOLS.map(([label, glyph], i) => html`<button class=${classMap({ tool: true, on: i === 0 })} aria-label=${label}>
            <svg viewBox="0 0 26 26" fill="none"><defs><radialGradient id="lens"><stop offset="0" stop-color="#f4f4f4"/><stop offset="1" stop-color="#a8adb0"/></radialGradient></defs>${glyph}</svg></button>`)}
          <div class="palette">${COLORS.map((c, i) => html`<button class=${classMap({ swatch: true, on: i === 5 })} style="background-color:${c}" aria-label=${c}></button>`)}</div>
          <label class="pick"><select aria-label="Unités"><option>200 unités</option></select>
            <svg viewBox="0 0 16 16"><rect width="16" height="16" rx="2" fill="#a5c3d0"/><path d="M4 6h8l-4 4.500z" fill="#000"/></svg></label>
          <label class="pick frameSize"><select aria-label="Période"><option>4 heures</option></select>
            <svg viewBox="0 0 16 16"><rect width="16" height="16" rx="2" fill="#a5c3d0"/><path d="M4 6h8l-4 4.500z" fill="#000"/></svg></label>
          <div class="right">
            <div class="indicator">
              <button aria-label="Indicateurs"><svg viewBox="0 0 34 26">
                <path d="M3 16Q8 10 14 6T22 17 31 4" fill="none" stroke="#d33c3c" stroke-width="1.500"/>
                <path d="M3 15Q8 18 13 10T24 14 32 13" fill="none" stroke="#2aa83a" stroke-width="1.500"/>
                <path d="M5.500 2.500h4v3.500h3.500v4H9.500v3.500h-4V10H2V6h3.500z" fill="#fff" stroke="#667" stroke-width="1"/>
                <path d="M25 4v4M22.500 6.500l2.500 3.500 2.500-3.500z" fill="#d82020" stroke="#d82020"/><path d="M14 18v-3M11.500 15.500l2.500-3.500 2.500 3.500z" fill="#1a9a2a" stroke="#1a9a2a"/>
                <path d="M4 19h4v5H4zM14 21h4v3h-4zM28 18h4v6h-4z" fill="#1fae2a"/><path d="M9 22h4v2H9zM19 22h3v2h-3zM23 22h4v2h-4z" fill="#b8307a"/><path d="M2 24.500h30" stroke="#2030c0"/></svg></button>
              <button class="drop" aria-label="Plus d'indicateurs"><svg viewBox="0 0 13 26"><path d="M3 12h7l-3.500 4z" fill="#000"/></svg></button>
            </div>
            <button class="sync" aria-label="Synchroniser"><svg width="18" height="30" viewBox="0 0 18 30"><path d="M18 .5H8l-7 5v18l7 6h10" fill="#e9f0f3" stroke="#76868f"/><path d="M7 12v8l-4-4z" fill="#000"/>
              <path d="M17 5q-5 0-4.500 7" fill="none" stroke="#e03030" stroke-width="2.500"/><path d="M9 10h8l-4 5z" fill="#e03030"/><path d="M9 25q6 0 4.500-5" fill="none" stroke="#18a028" stroke-width="2.500"/><path d="M9 21h8l-4-5z" fill="#18a028"/></svg></button>
          </div>
        </div>

        <div class="panels">
          <section class="panel price">
            <div class="plot">
              ${this.renderPrice()}
              ${([[285, "0,69806"], [360, "0,691685"], [380, "0,689947"], [463, "0,682825"]] as [number, string][]).map(([y, t]) => html`<div class="level" style=${pct(y, PRICE)}>${t}</div>`)}
              <div class="order" style=${pct(324, PRICE)}><div class="cell grip">${handle}</div><div class="cell sell"><span>V:LMT</span><span>0,693070</span></div><div class="cell gain">46,6 pips</div><button class="cell x" aria-label="Annuler V:LMT">${redCross}</button></div>
              <div class="order" style=${pct(379, PRICE)}><div class="cell hold">0,688410</div><button class="cell x" aria-label="Fermer la position">${redCross}</button></div>
              <div class="order" style=${pct(398, PRICE)}><div class="cell gain strong">+0,000290</div><div class="cell gain wide"><b>2,9</b> pips</div></div>
              <div class="order" style=${pct(425, PRICE)}><div class="cell grip">${handle}</div><div class="cell sell"><span>V:STP</span><span>0,686360</span></div><div class="cell loss">-20,5 pips</div><button class="cell x" aria-label="Annuler V:STP">${redCross}</button></div>
              <div class="credit">© ProRealTime Trading <i>Données en temps réel</i></div>
              <div class="head"><span>Prix</span>${wrench}${windowGlyph}${closeGlyph}${downPage}${upPage}</div>
            </div>
            <div class="axis">
              ${this.mark(PRICE, 88, "0,715")}${this.mark(PRICE, 146, "0,71")}${this.mark(PRICE, 205, "0,705")}${this.mark(PRICE, 263, "0,7", "big")}
              ${this.mark(PRICE, 321)}${this.mark(PRICE, 336)}${this.mark(PRICE, 380)}${this.mark(PRICE, 385)}${this.mark(PRICE, 389)}${this.mark(PRICE, 437, "0,685")}
              ${this.tag(PRICE, 336, "0,693682", "green")}${this.tag(PRICE, 323, "0,69480", "cursor")}
              ${this.tag(PRICE, 374, "0,689947", "red")}${this.tag(PRICE, 389, "0,688420", "navy")}
              ${this.tag(PRICE, 374, "", "blank")}${this.tag(PRICE, 377, "", "blank")}
              ${this.tag(PRICE, 401, "0,688405", "maroon")}${this.tag(PRICE, 409, "3h39m", "timer")}${this.tag(PRICE, 394, "0,688705", "last")}
            </div>
          </section>
          <section class="panel rsi">
            <div class="plot">${this.renderRsi()}<div class="head"><span>Relative strength index (RSI) (21)</span>${wrench}${windowGlyph}${closeGlyph}</div></div>
            <div class="axis">
              ${this.mark(OSC1, 525, "100", "big")}${this.mark(OSC1, 542, "80")}${this.mark(OSC1, 559, "60")}${this.mark(OSC1, 577)}${this.mark(OSC1, 594, "20")}
              ${[533, 551, 568, 585, 603].map((y) => this.mark(OSC1, y, "", "minor"))}
              ${this.tag(OSC1, 575, "42,305")}
            </div>
          </section>
          <section class="panel stoch">
            <div class="plot">${this.renderStochastic()}<div class="head"><span>Stochastique (21 3 3)</span>${wrench}${windowGlyph}${closeGlyph}</div></div>
            <div class="axis">
              ${this.mark(OSC2, 625, "100", "big")}${this.mark(OSC2, 666, "50")}${this.mark(OSC2, 687)}
              ${this.tag(OSC2, 680, "24,169", "rose")}${this.tag(OSC2, 694, "23,808")}
            </div>
          </section>
        </div>
        <div class="dates"><div class="scale">
          ${DATES.map(([x, t, big]) => html`<div class=${classMap({ date: true, big: !!big })} style=${left(x)}>${t}</div>`)}
          <div class="when" style=${left(1035)}>lun. 27 mai 2019 10:00</div>
        </div></div>
        <footer class="bottom">
          <button class="share"><svg viewBox="0 0 13 16"><path d="M10 4L1 8.500 10 13" stroke="#fff" stroke-width="1.500" fill="none"/><circle cx="10" cy="3.500" r="2.500" fill="#fff"/><circle cx="10" cy="12.500" r="2.500" fill="#fff"/><circle cx="1" cy="8" r="2.500" fill="#fff"/></svg>Partager</button>
          <div class="left">
            <button aria-label="Enregistrer"><svg viewBox="0 0 24 22"><path d="M3 2h8v3H7v12h4v3H3z" fill="#1f5f98"/><path d="M12 4h9l-2 8v6h-5z" fill="#808890"/><path d="M10 8l11-6-3 10-3-2z" fill="#22d83a" stroke="#0f8a20" stroke-width=".6"/><path d="M14 16.500h8l-4 4z" fill="#000" stroke="#fff" stroke-width=".6"/></svg></button>
            <button aria-label="Lier"><svg viewBox="0 0 24 22"><rect x="3" y="2" width="5" height="7" rx="2.500" fill="none" stroke="#111" stroke-width="1.800"/><rect x="3" y="12" width="5" height="7" rx="2.500" fill="none" stroke="#111" stroke-width="1.800"/><path d="M5.500 6v9" stroke="#111" stroke-width="1.800"/><path d="M12.500 3v12M19 0v15" stroke="#333"/><path d="M10.500 6h4v6h-4z" fill="#e04848" stroke="#822"/><path d="M17 2h4v9h-4z" fill="#2fd83a" stroke="#161"/><path d="M13 16h8l-4 4z" fill="#000" stroke="#fff" stroke-width=".6"/></svg></button>
            <button aria-label="Liste"><svg viewBox="0 0 24 22"><path d="M5.500 3.500h12v14h-12z" fill="#fff" stroke="#000" stroke-width="1.500"/><path d="M7 6h4M7 9h3l2-1 4 3M7 12h3l2-1 4 3M7 15h3l2-1 4 2" stroke="#000" stroke-width="1.500" fill="none"/><path d="M13 4.500h4v3z" fill="#e04848"/></svg></button>
            <button aria-label="Carnet"><svg viewBox="0 0 24 22"><path d="M5 3h9v3H5zM7 7h7v3H7zM5 11h9v3H5zM5 15h9v3H5z" fill="#4ac050" stroke="#1a6a20" stroke-width=".8"/><path d="M14 3h4v3h-4zM14 7h6v3h-6zM14 11h3v3h-3zM14 15h5v3h-5z" fill="#f07878" stroke="#923" stroke-width=".8"/></svg></button>
          </div>
          <div class="scroll">
            <button class="step" aria-label="Reculer"><svg viewBox="0 0 13 14"><path d="M8 4v6L4.500 7z" fill="#000"/></svg></button>
            <div class="track"><div class="thumb" role="scrollbar" aria-label="Historique" aria-valuenow="100"><svg width="8" height="6" viewBox="0 0 8 6"><path d="M1 .5h6M1 3h6M1 5.500h6" stroke="#f0f7fa"/><path d="M1 1.500h6M1 4h6" stroke="#6f8a96" stroke-width=".6"/></svg></div></div>
            <button class="step" aria-label="Avancer"><svg viewBox="0 0 13 14"><path d="M5 4v6l3.500-3z" fill="#000"/></svg></button>
          </div>
          <button class="zoom" aria-label="Réglages"><svg viewBox="0 0 24 24"><path d="M7 11v11M18 2v19" stroke="#333"/><path d="M5 14h5v6H5z" fill="#e07878" stroke="#922"/><path d="M14.500 5h5v13h-5z" fill="#4ed050" stroke="#171"/><path d="M6 19l6-6c-.5-3 1.500-5 4-5l-1 3 2 1.500 2-1c0 3-2 4-4.500 3.700L8.500 21c-1.500 1-3.500-.5-2.500-2z" fill="#fff" stroke="#111"/></svg></button>
          ${this.zoomButton("Ajuster", svg`<path d="M21 3v9M19 5l2-2.500L23 5M19 10l2 2.500 2-2.500M2 20h10M4 18l-2 2 2 2M10 18l2 2-2 2" stroke="#1030e0" stroke-width="1.300" fill="none"/>`)}
          ${this.zoomButton("Zoom arrière", svg`<path d="M7 10h6" stroke="#0a0ac8" stroke-width="2"/>`)}
          ${this.zoomButton("Zoom avant", svg`<path d="M7 10h6M10 7v6" stroke="#0a0ac8" stroke-width="2"/>`)}
        </footer>
      </main>
    `;
  }
}
